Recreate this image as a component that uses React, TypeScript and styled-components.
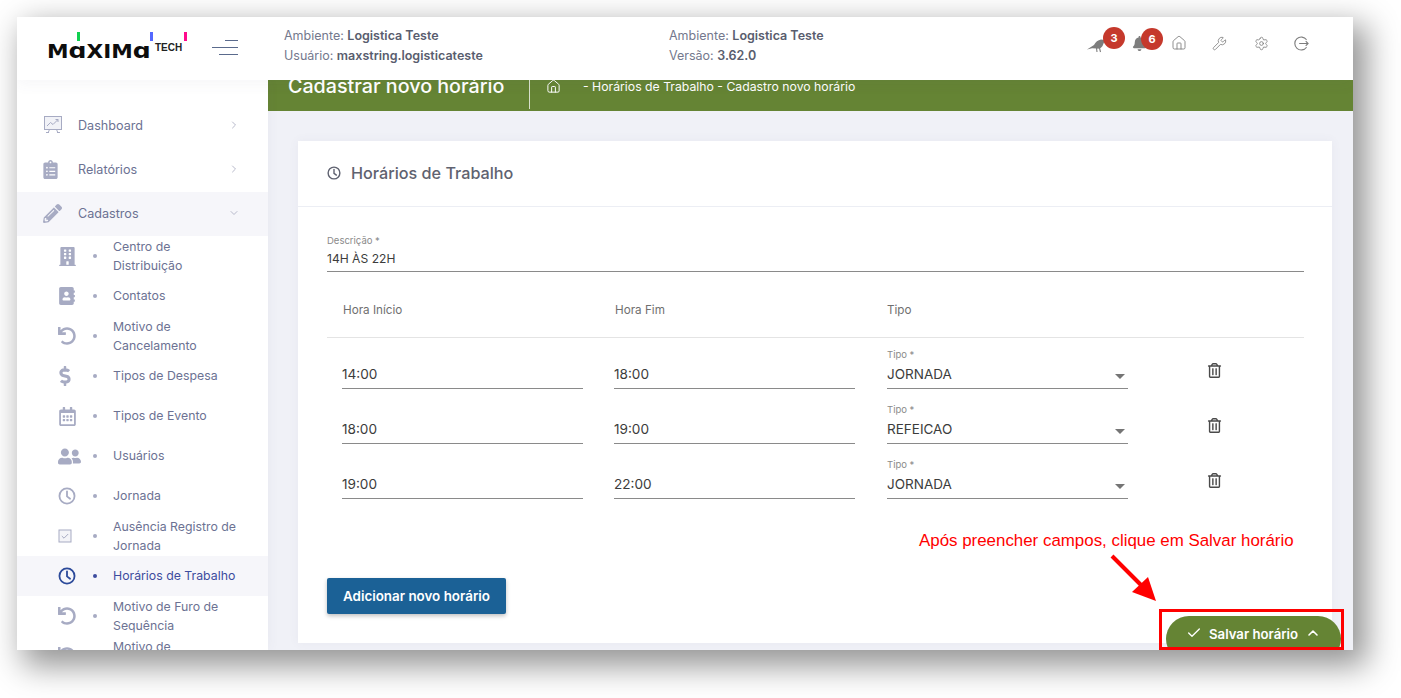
import React from "react";
import styled, { createGlobalStyle } from "styled-components";
import { Home, Wrench, Settings, ChevronRight, ChevronDown, ChevronUp, Check } from "lucide-react";
import {
  FaClipboardList, FaPencilAlt, FaBuilding, FaAddressBook, FaUndo, FaDollarSign,
  FaRegCalendarAlt, FaUserFriends, FaBell, FaRegTrashAlt,
} from "react-icons/fa";

const Global = createGlobalStyle`
  html, body { margin: 0; padding: 0; background: #fff; }
  body { font-family: Inter, "Noto Sans", sans-serif; }
  * { box-sizing: border-box; }
`;

const Page = styled.div`
  width: 1401px;
  height: 698px;
  padding: 17px 48px 48px 17px;
  overflow: hidden;
`;
const Frame = styled.div`
  position: relative;
  width: 1336px;
  height: 633px;
  overflow: hidden;
  background: #f0f1f7;
`;
const FrameShadow = styled.div`
  width: 1336px;
  height: 633px;
  box-shadow: 10px 12px 30px 4px rgba(0, 0, 0, 0.42);
`;
const Header = styled.header`
  position: relative;
  z-index: 3;
  display: flex;
  height: 63px;
  background: #fff;
  box-shadow: 0 4px 14px rgba(80, 80, 120, 0.05);
`;
const Brand = styled.div`
  width: 251px;
  display: flex;
  align-items: center;
  justify-content: space-between;
  padding: 0 30px 0 32px;
`;
const Logo = styled.div`
  position: relative;
  display: flex;
  align-items: flex-start;
  height: 30px;
  width: 140px;
  margin-top: -4px;
`;
const LogoWord = styled.span`
  font-family: "DejaVu Sans", sans-serif;
  font-weight: 700;
  font-size: 19px;
  line-height: 22px;
  margin: 8px 0 0 -2px;
  color: #0d0d0d;
  transform: scaleX(1.14);
  transform-origin: left center;
  white-space: nowrap;
`;
const LogoRound = styled.span`
  font-size: 22px;
  line-height: 20px;
`;
const LogoTech = styled.span`
  position: absolute;
  left: 106px;
  top: 10px;
  font-family: "Liberation Sans", sans-serif;
  font-size: 10px;
  font-weight: 700;
  color: #222;
`;
const LogoBar = styled.i<{ $x: number; $c: string }>`
  position: absolute;
  top: 0;
  left: ${(p) => p.$x}px;
  width: 3px;
  height: 9px;
  background: ${(p) => p.$c};
`;
const Burger = styled.div`
  display: flex;
  flex-direction: column;
  align-items: flex-end;
  gap: 6px;
  width: 26px;
  margin-top: -2px;
`;
const BurgerLine = styled.i<{ $w: number }>`
  display: block;
  height: 1px;
  width: ${(p) => p.$w}px;
  background: #5a6a8c;
`;
const InfoArea = styled.div`
  flex: 1;
  display: flex;
  padding-left: 16px;
`;
const InfoBlock = styled.div`
  width: 385px;
  padding-top: 9px;
  font-size: 12.5px;
  line-height: 20px;
  color: #74788d;
  white-space: nowrap;
  b { font-weight: 600; color: #595d6e; }
`;
const Tools = styled.div`
  display: flex;
  align-items: center;
  height: 52px;
  margin-left: 22px;
  color: #7d7d7d;
`;
const ToolSlot = styled.div<{ $w: number; $down?: number }>`
  position: relative;
  width: ${(p) => p.$w}px;
  display: flex;
  justify-content: center;
  padding-top: ${(p) => p.$down ?? 0}px;
`;
const Badge = styled.span<{ $l: number; $top: number }>`
  position: absolute;
  left: ${(p) => p.$l}px;
  top: ${(p) => p.$top}px;
  width: 22px;
  height: 22px;
  border-radius: 50%;
  background: #c5392c;
  color: #fff;
  font-size: 11px;
  font-weight: 700;
  display: flex;
  align-items: center;
  justify-content: center;
`;
const Body = styled.div`
  display: flex;
  height: 570px;
`;
const Side = styled.aside`
  position: relative;
  z-index: 2;
  width: 251px;
  flex: none;
  height: 570px;
  overflow: hidden;
  background: #fff;
  padding-top: 24px;
  box-shadow: 0 0 12px rgba(80, 80, 120, 0.06);
`;
const MainItem = styled.div<{ $open?: boolean }>`
  display: flex;
  align-items: center;
  height: 44px;
  padding: 0 28px 2px 26px;
  background: ${(p) => (p.$open ? "#f6f6fa" : "#fff")};
  color: #6c7293;
  font-size: 12.6px;
`;
const MainIcon = styled.span<{ $nudge?: number }>`
  width: 35px;
  flex: none;
  display: flex;
  color: #a7abc3;
  margin-left: ${(p) => p.$nudge ?? 0}px;
  margin-right: ${(p) => -(p.$nudge ?? 0)}px;
`;
const Grow = styled.span`
  flex: 1;
`;
const Chevron = styled.span`
  display: flex;
  color: #b8bacb;
`;
const SubItem = styled.div<{ $active?: boolean }>`
  display: flex;
  align-items: center;
  height: 40px;
  padding-left: 41px;
  background: ${(p) => (p.$active ? "#f6f6fa" : "#fff")};
  color: ${(p) => (p.$active ? "#3d4c9e" : "#6c7293")};
  font-size: 12.3px;
  line-height: 19px;
`;
const SubIcon = styled.span<{ $active?: boolean }>`
  width: 18px;
  flex: none;
  display: flex;
  justify-content: flex-start;
  color: ${(p) => (p.$active ? "#2c4a9a" : "#a7abc3")};
  svg { flex: none; }
`;
const Dollar = styled(FaDollarSign)`
  margin-left: -3px;
`;
const Dot = styled.i<{ $active?: boolean }>`
  flex: none;
  width: 4px;
  height: 4px;
  border-radius: 50%;
  margin: 0 16px 0 17px;
  background: ${(p) => (p.$active ? "#3d4c9e" : "#a7abc3")};
`;
const SubLabel = styled.span<{ $two: boolean }>`
  width: 128px;
  margin-top: ${(p) => (p.$two ? 0 : -2)}px;
`;
const Content = styled.main`
  flex: 1;
  min-width: 0;
`;
const Banner = styled.div`
  position: relative;
  z-index: 1;
  display: flex;
  align-items: flex-start;
  height: 51px;
  margin-top: -20px;
  padding: 13px 0 0 20px;
  background: #658434;
  color: #fff;
`;
const PageTitle = styled.div`
  font-size: 19.7px;
  font-weight: 500;
  line-height: 27px;
  width: 242px;
  height: 36px;
  white-space: nowrap;
  border-right: 1px solid rgba(255, 255, 255, 0.75);
`;
const Crumbs = styled.div`
  display: flex;
  align-items: center;
  height: 27px;
  padding-left: 16px;
  font-size: 12.25px;
  gap: 22px;
  white-space: nowrap;
`;
const Card = styled.section`
  margin: 30px 21px 0 30px;
  height: 502px;
  background: #fff;
  box-shadow: 0 0 10px rgba(80, 80, 120, 0.06);
`;
const CardHead = styled.div`
  display: flex;
  align-items: center;
  gap: 10px;
  height: 66px;
  padding: 0 29px 2px;
  border-bottom: 1px solid #eceef4;
  color: #5f6270;
  font-size: 16.2px;
  font-weight: 500;
`;
const CardBody = styled.div`
  padding: 28px 28px 0 29px;
`;
const FieldLabel = styled.div`
  font-size: 9.5px;
  line-height: 12px;
  color: #8a8a8a;
`;
const FieldValue = styled.div`
  font-size: 12.1px;
  line-height: 18px;
  margin-top: 2px;
  height: 23px;
  padding-top: 1px;
  color: #3c3c3c;
  border-bottom: 1px solid #8a8a8a;
  position: relative;
`;
const Grid = styled.div`
  display: grid;
  grid-template-columns: 287px 273px 272px 145px;
`;
const HeadRow = styled(Grid)`
  height: 66px;
  padding-top: 11px;
  align-items: center;
  border-bottom: 1px solid #e4e4e4;
  color: #6f6f6f;
  font-size: 11.7px;
`;
const HeadCell = styled.span<{ $pad: number }>`
  padding-left: ${(p) => p.$pad}px;
`;
const Rows = styled.div`
  display: flex;
  flex-direction: column;
  gap: 4px;
`;
const TableRow = styled(Grid)`
  height: 51px;
  align-items: end;
`;
const TimeCell = styled.div<{ $left?: number }>`
  margin-left: ${(p) => p.$left ?? 0}px;
  width: 241px;
  height: 29px;
  padding-top: 5px;
  font-size: 13.6px;
  line-height: 18px;
  color: #3c3c3c;
  border-bottom: 1px solid #8a8a8a;
`;
const SelectCell = styled.div`
  width: 241px;
`;
const SelectValue = styled(FieldValue)`
  margin-top: 0;
  height: 28px;
  padding-top: 4px;
  font-size: 13.5px;
`;
const Caret = styled.i`
  position: absolute;
  right: 3px;
  top: 13px;
  border-left: 5px solid transparent;
  border-right: 5px solid transparent;
  border-top: 5px solid #757575;
`;
const TrashCell = styled.div`
  display: flex;
  justify-content: center;
  height: 26px;
  width: 110px;
  color: #4a4a4a;
`;
const AddButton = styled.button`
  display: block;
  margin-top: 79px;
  width: 179px;
  height: 36px;
  border: 0;
  border-radius: 2px;
  background: #1b6196;
  color: #fff;
  font-family: Inter, sans-serif;
  font-size: 13.4px;
  font-weight: 600;
  box-shadow: 0 2px 4px rgba(0, 0, 0, 0.25);
`;
const SaveButton = styled.button`
  position: absolute;
  left: 1149px;
  top: 599px;
  width: 175px;
  height: 46px;
  border: 0;
  border-radius: 23px;
  background: #658434;
  color: #fff;
  font-family: Inter, sans-serif;
  font-size: 13.2px;
  font-weight: 600;
  display: flex;
  align-items: flex-start;
  padding: 9px 0 0 20px;
  gap: 7px;
  line-height: 18px;
`;
const RedBox = styled.div`
  position: absolute;
  left: 1142px;
  top: 592px;
  width: 185px;
  height: 41px;
  border: 3px solid #f00;
`;
const Note = styled.div`
  position: absolute;
  left: 902px;
  top: 514px;
  font-family: "Liberation Sans", sans-serif;
  font-size: 16.9px;
  line-height: 20px;
  color: #f00;
  white-space: nowrap;
`;
const Arrow = styled.svg`
  position: absolute;
  left: 1090px;
  top: 535px;
`;

const Presentation = () => (
  <svg width="20" height="20" viewBox="0 0 20 20" fill="none" stroke="#a7abc3" strokeWidth="1">
    <rect x="1.5" y="1.5" width="17" height="13" fill="#f1f2f7" />
    <path d="M4 11l3.5-3.5 2.5 2 5-5M12.5 4.5h2.5v2.5" />
    <path d="M5 18l1.5-3.5M15 18l-1.5-3.5M3 17.5h3M14 17.5h3" />
  </svg>
);
const ThickClock = ({ size, color }: { size: number; color?: string }) => (
  <svg width={size} height={size} viewBox="0 0 20 20" fill="none" stroke={color ?? "currentColor"} strokeWidth="2">
    <circle cx="10" cy="10" r="8.4" />
    <path d="M10 4.8V10.4L13.4 13" strokeLinecap="round" />
  </svg>
);
const CheckBoxIcon = () => (
  <svg width="14" height="14" viewBox="0 0 14 14" fill="#f4f4f8" stroke="#a7abc3" strokeWidth="1">
    <rect x="1" y="1" width="12" height="12" />
    <path d="M3.8 7l2.2 2.2 4.2-4.2" fill="none" />
  </svg>
);
const LogoutIcon = () => (
  <svg width="15" height="15" viewBox="0 0 16 16" fill="none" stroke="#7d7d7d" strokeWidth="1.2">
    <path d="M13.4 4A6.9 6.9 0 1 0 13.4 12" />
    <path d="M5.5 8H15M12.5 5.5L15 8l-2.5 2.5" />
  </svg>
);
const Crow = () => (
  <svg width="20" height="16" viewBox="0 0 20 16" fill="#7d7d7d">
    <path d="M0 12.5L7 8C8.5 5 11 3 14 2.5L18 3 15.5 9C14.5 11 12 12 9.5 11.5L5 11.2Z" />
    <path d="M9.5 11L10 15M12.5 11L13.5 15" stroke="#7d7d7d" strokeWidth="1.1" fill="none" />
  </svg>
);

type Sub = { label: string; icon: React.ReactNode; active?: boolean; two?: boolean };
const subs: Sub[] = [
  { label: "Centro de Distribuição", icon: <FaBuilding size={19} />, two: true },
  { label: "Contatos", icon: <FaAddressBook size={18} /> },
  { label: "Motivo de Cancelamento", icon: <FaUndo size={18} />, two: true },
  { label: "Tipos de Despesa", icon: <Dollar size={20} /> },
  { label: "Tipos de Evento", icon: <FaRegCalendarAlt size={19} /> },
  { label: "Usuários", icon: <FaUserFriends size={23} /> },
  { label: "Jornada", icon: <ThickClock size={18} /> },
  { label: "Ausência Registro de Jornada", icon: <CheckBoxIcon />, two: true },
  { label: "Horários de Trabalho", icon: <ThickClock size={18} />, active: true },
  { label: "Motivo de Furo de Sequência", icon: <FaUndo size={18} />, two: true },
  { label: "Motivo de Cancelamento", icon: <FaUndo size={18} />, two: true },
];

const rows = [
  ["14:00", "18:00", "JORNADA"],
  ["18:00", "19:00", "REFEICAO"],
  ["19:00", "22:00", "JORNADA"],
];

export default function App() {
  return (
    <Page>
      <Global />
      <FrameShadow>
        <Frame>
          <Header>
            <Brand>
              <Logo>
                <LogoWord>
                  M<LogoRound>ɑ</LogoRound>XIM<LogoRound>ɑ</LogoRound>
                </LogoWord>
                <LogoBar $x={28} $c="#10d050" />
                <LogoBar $x={101} $c="#5468ff" />
                <LogoBar $x={135} $c="#ff0a8c" />
                <LogoTech>TECH</LogoTech>
              </Logo>
              <Burger>
                <BurgerLine $w={13} />
                <BurgerLine $w={26} />
                <BurgerLine $w={19} />
              </Burger>
            </Brand>
            <InfoArea>
              <InfoBlock>
                Ambiente: <b>Logistica Teste</b>
                <br />
                Usuário: <b>maxstring.logisticateste</b>
              </InfoBlock>
              <InfoBlock>
                Ambiente: <b>Logistica Teste</b>
                <br />
                Versão: <b>3.62.0</b>
              </InfoBlock>
              <Tools>
                <ToolSlot $w={42} $down={3}>
                  <Crow />
                  <Badge $l={27} $top={-7}>3</Badge>
                </ToolSlot>
                <ToolSlot $w={42} $down={1}>
                  <FaBell size={15} />
                  <Badge $l={23} $top={-7}>6</Badge>
                </ToolSlot>
                <ToolSlot $w={38}>
                  <Home size={16} strokeWidth={1.3} />
                </ToolSlot>
                <ToolSlot $w={43}>
                  <Wrench size={15} strokeWidth={1.3} />
                </ToolSlot>
                <ToolSlot $w={40}>
                  <Settings size={15} strokeWidth={1.3} />
                </ToolSlot>
                <ToolSlot $w={40}>
                  <LogoutIcon />
                </ToolSlot>
              </Tools>
            </InfoArea>
          </Header>
          <Body>
            <Side>
              <MainItem>
                <MainIcon><Presentation /></MainIcon>
                Dashboard
                <Grow />
                <Chevron><ChevronRight size={12} /></Chevron>
              </MainItem>
              <MainItem>
                <MainIcon $nudge={-2}><FaClipboardList size={19} /></MainIcon>
                Relatórios
                <Grow />
                <Chevron><ChevronRight size={12} /></Chevron>
              </MainItem>
              <MainItem $open>
                <MainIcon><FaPencilAlt size={19} /></MainIcon>
                Cadastros
                <Grow />
                <Chevron><ChevronDown size={12} /></Chevron>
              </MainItem>
              {subs.map((s, i) => (
                <SubItem key={i} $active={s.active}>
                  <SubIcon $active={s.active}>{s.icon}</SubIcon>
                  <Dot $active={s.active} />
                  <SubLabel $two={!!s.two}>{s.label}</SubLabel>
                </SubItem>
              ))}
            </Side>
            <Content>
              <Banner>
                <PageTitle>Cadastrar novo horário</PageTitle>
                <Crumbs>
                  <Home size={15} strokeWidth={1.6} />
                  <span>- Horários de Trabalho - Cadastro novo horário</span>
                </Crumbs>
              </Banner>
              <Card>
                <CardHead>
                  <ThickClock size={14} />
                  Horários de Trabalho
                </CardHead>
                <CardBody>
                  <FieldLabel>Descrição *</FieldLabel>
                  <FieldValue>14H ÀS 22H</FieldValue>
                  <HeadRow>
                    <HeadCell $pad={16}>Hora Início</HeadCell>
                    <HeadCell $pad={1}>Hora Fim</HeadCell>
                    <HeadCell $pad={0}>Tipo</HeadCell>
                  </HeadRow>
                  <Rows>
                    {rows.map((r, i) => (
                      <TableRow key={i}>
                        <TimeCell $left={15}>{r[0]}</TimeCell>
                        <TimeCell>{r[1]}</TimeCell>
                        <SelectCell>
                          <FieldLabel>Tipo *</FieldLabel>
                          <SelectValue>
                            {r[2]}
                            <Caret />
                          </SelectValue>
                        </SelectCell>
                        <TrashCell>
                          <FaRegTrashAlt size={15} />
                        </TrashCell>
                      </TableRow>
                    ))}
                  </Rows>
                  <AddButton>Adicionar novo horário</AddButton>
                </CardBody>
              </Card>
            </Content>
          </Body>
          <Note>Após preencher campos, clique em Salvar horário</Note>
          <Arrow width="60" height="60" viewBox="0 0 60 60" fill="none">
            <path d="M5 4L40 39" stroke="#f00" strokeWidth="4" />
            <path d="M49 49L25 40L41 25Z" fill="#f00" />
          </Arrow>
          <SaveButton>
            <Check size={16} strokeWidth={2} />
            Salvar horário
            <ChevronUp size={16} strokeWidth={2.4} />
          </SaveButton>
          <RedBox />
        </Frame>
      </FrameShadow>
    </Page>
  );
}
